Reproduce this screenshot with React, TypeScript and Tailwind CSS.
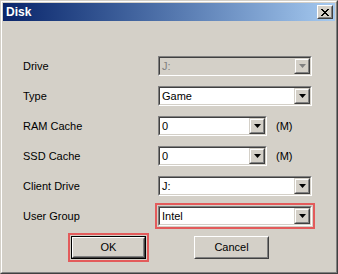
import React from "react";

const font = { fontFamily: '"Liberation Sans", Arial, sans-serif' };

function Arrow({ disabled }: { disabled?: boolean }) {
  return (
    <div className="w-[16px] h-[16px] border border-t-[#d4d0c8] border-l-[#d4d0c8] border-r-[#404040] border-b-[#404040]">
      <div className="w-full h-full border border-t-white border-l-white border-r-[#808080] border-b-[#808080] bg-[#d4d0c8] flex items-center justify-center">
        <svg width="7" height="4" viewBox="0 0 7 4">
          <path d="M0 0H7L3.5 4Z" fill={disabled ? "#808080" : "#000"} />
        </svg>
      </div>
    </div>
  );
}

function Combo({ value, w, disabled }: { value: string; w: string; disabled?: boolean }) {
  return (
    <div className={`${w} h-[20px] border border-t-[#808080] border-l-[#808080] border-r-white border-b-white`}>
      <div
        className={`w-full h-full border border-t-[#404040] border-l-[#404040] border-r-[#d4d0c8] border-b-[#d4d0c8] flex items-center ${
          disabled ? "bg-[#d4d0c8]" : "bg-white"
        }`}
      >
        <span className={`flex-1 pl-[2px] text-[11px] leading-none ${disabled ? "text-[#808080]" : "text-black"}`}>
          {value}
        </span>
        <Arrow disabled={disabled} />
      </div>
    </div>
  );
}

function Row({ label, children }: { label: string; children: React.ReactNode }) {
  return (
    <div className="flex items-center h-[20px]">
      <div className="w-[135px] text-[11px] text-black leading-none">{label}</div>
      {children}
    </div>
  );
}

function Btn({ label, def }: { label: string; def?: boolean }) {
  const inner = (
    <div className="w-full h-full border border-t-white border-l-white border-r-[#404040] border-b-[#404040]">
      <div className="w-full h-full border border-t-[#d4d0c8] border-l-[#d4d0c8] border-r-[#808080] border-b-[#808080] bg-[#d4d0c8] flex items-center justify-center text-[11px] text-black leading-none">
        {label}
      </div>
    </div>
  );
  if (def)
    return <div className="w-[75px] h-[23px] border border-black">{inner}</div>;
  return <div className="w-[75px] h-[23px]">{inner}</div>;
}

export default function App() {
  return (
    <div style={font} className="w-[338px] h-[274px] border border-t-[#d4d0c8] border-l-[#d4d0c8] border-r-[#404040] border-b-[#404040]">
      <div className="w-full h-full border border-t-white border-l-white border-r-[#808080] border-b-[#808080] bg-[#d4d0c8] p-[1px] flex flex-col">
        <div className="h-[18px] flex items-center justify-between bg-gradient-to-r from-[#0a246a] to-[#a6caf0] pl-[3px] pr-[2px]">
          <span className="text-white font-bold text-[12px] leading-none">Disk</span>
          <div className="w-[16px] h-[14px] border border-t-white border-l-white border-r-[#404040] border-b-[#404040]">
            <div className="w-full h-full border border-t-[#d4d0c8] border-l-[#d4d0c8] border-r-[#808080] border-b-[#808080] bg-[#d4d0c8] flex items-center justify-center">
              <svg width="8" height="7" viewBox="0 0 8 7">
                <path d="M0 0L7 7M1 0L8 7M7 0L0 7M8 0L1 7" stroke="#000" strokeWidth="1" />
              </svg>
            </div>
          </div>
        </div>
        <div className="flex flex-col pl-[20px] pt-[35px] gap-[10px]">
          <Row label="Drive">
            <Combo value="J:" w="w-[154px]" disabled />
          </Row>
          <Row label="Type">
            <Combo value="Game" w="w-[154px]" />
          </Row>
          <Row label="RAM Cache">
            <Combo value="0" w="w-[109px]" />
            <span className="ml-[9px] text-[11px] leading-none text-black">(M)</span>
          </Row>
          <Row label="SSD Cache">
            <Combo value="0" w="w-[109px]" />
            <span className="ml-[9px] text-[11px] leading-none text-black">(M)</span>
          </Row>
          <Row label="Client Drive">
            <Combo value="J:" w="w-[154px]" />
          </Row>
          <Row label="User Group">
            <div className="outline-2 outline-[#e35b5b] outline-offset-[1px]">
              <Combo value="Intel" w="w-[154px]" />
            </div>
          </Row>
          <div className="flex pl-[48px] gap-[48px]">
            <div className="outline-2 outline-[#e35b5b] outline-offset-[1px]">
              <Btn label="OK" def />
            </div>
            <Btn label="Cancel" />
          </div>
        </div>
      </div>
    </div>
  );
}
